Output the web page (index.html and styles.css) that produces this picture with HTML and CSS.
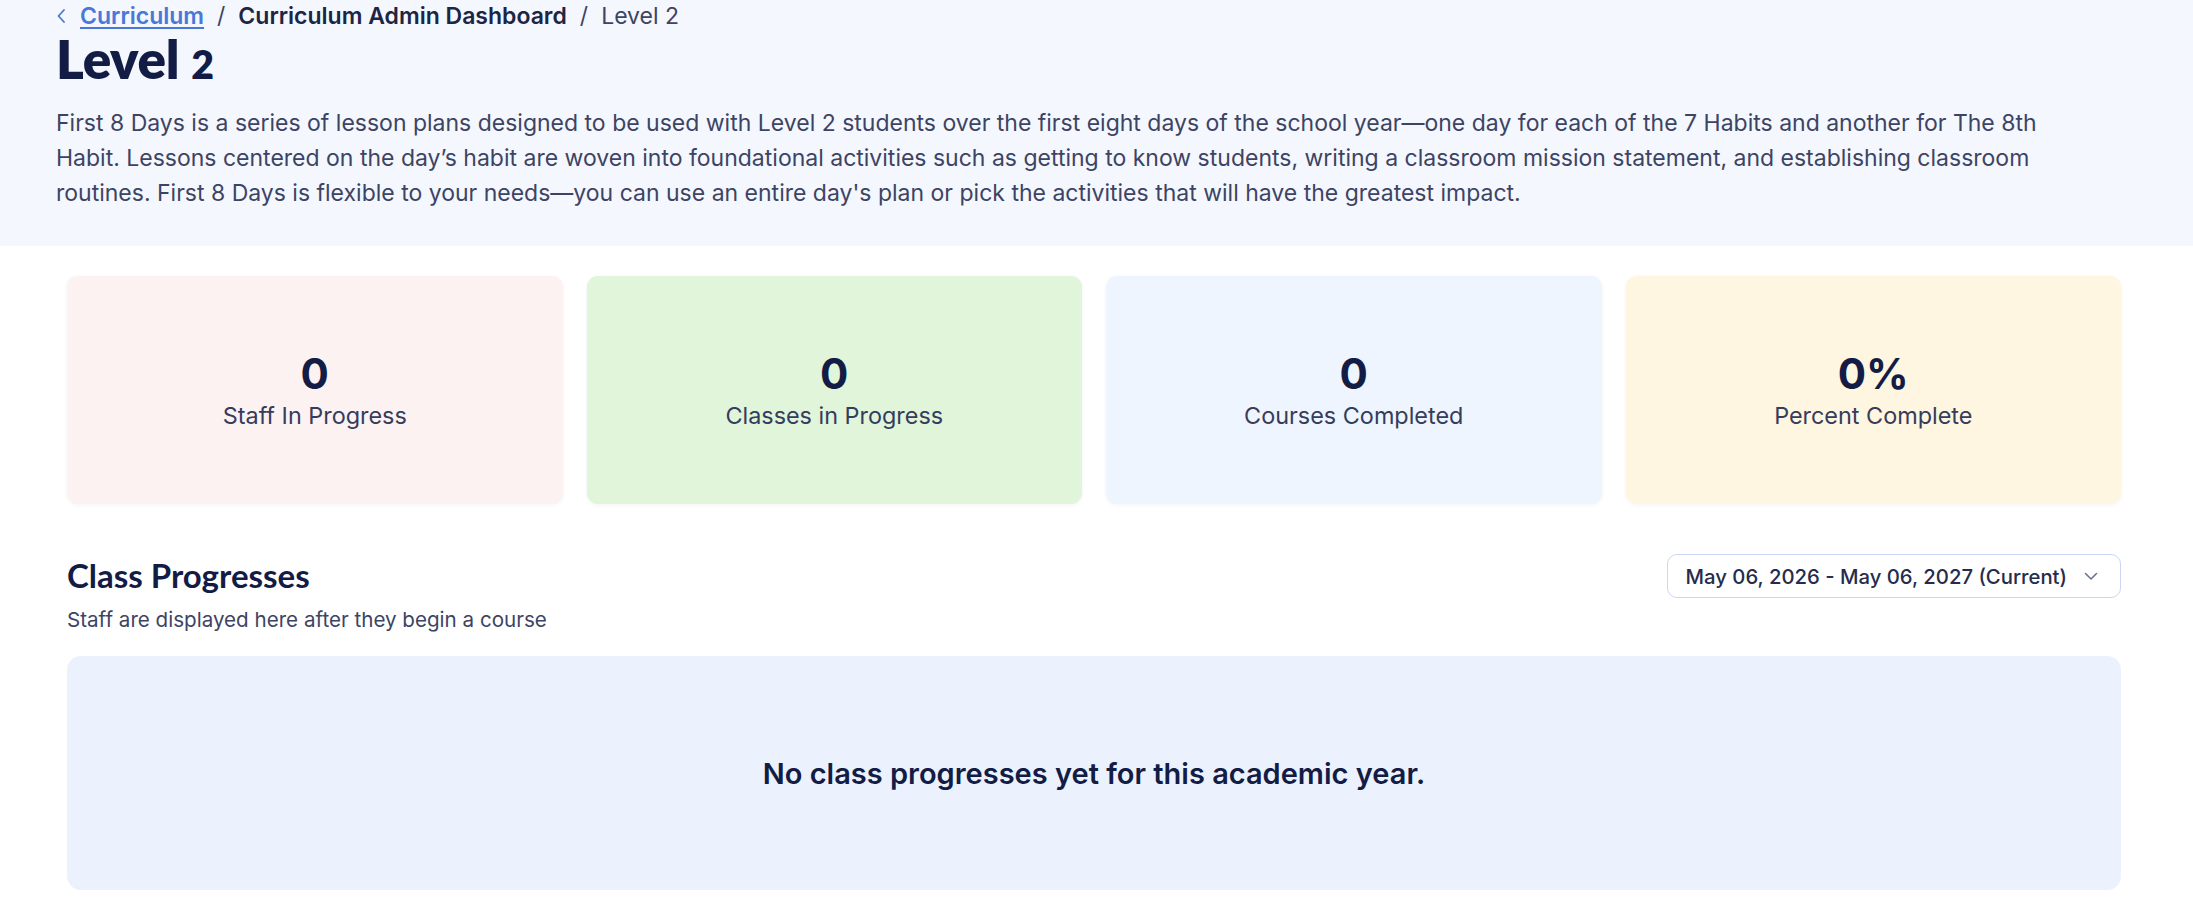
FILE: index.html
```html
<!DOCTYPE html>
<html lang="en">
<head>
  <meta charset="UTF-8" />
  <meta name="viewport" content="width=device-width, initial-scale=1" />
  <title>Level 2 - Curriculum Admin Dashboard</title>
  <link rel="stylesheet" href="styles.css">
</head>
<body>
  <header class="page-header">
    <nav class="breadcrumb">
      <svg class="crumb-back" width="10" height="16" viewBox="0 0 10 16" aria-hidden="true">
        <path d="M8 2 L2.5 8 L8 14" fill="none" stroke="#4a78d8" stroke-width="1.8" stroke-linecap="round" stroke-linejoin="round"/>
      </svg>
      <a href="#" class="crumb-link">Curriculum</a>
      <span class="crumb-sep">/</span>
      <span class="crumb-strong">Curriculum Admin Dashboard</span>
      <span class="crumb-sep">/</span>
      <span class="crumb-current">Level 2</span>
    </nav>

    <h1 class="page-title">Level <span class="old-num">2</span></h1>

    <p class="page-desc">
      First 8 Days is a series of lesson plans designed to be used with Level 2 students over the first eight days of the school year—one day for each of the 7 Habits and another for The 8th Habit. Lessons centered on the day’s habit are woven into foundational activities such as getting to know students, writing a classroom mission statement, and establishing classroom routines. First 8 Days is flexible to your needs—you can use an entire day's plan or pick the activities that will have the greatest impact.
    </p>
  </header>

  <main class="content">
    <section class="stats">
      <div class="stat-card stat-pink">
        <div class="stat-value">0</div>
        <div class="stat-label">Staff In Progress</div>
      </div>
      <div class="stat-card stat-green">
        <div class="stat-value">0</div>
        <div class="stat-label">Classes in Progress</div>
      </div>
      <div class="stat-card stat-blue">
        <div class="stat-value">0</div>
        <div class="stat-label">Courses Completed</div>
      </div>
      <div class="stat-card stat-yellow">
        <div class="stat-value">0%</div>
        <div class="stat-label">Percent Complete</div>
      </div>
    </section>

    <section class="progress-section">
      <div class="section-head">
        <div>
          <h2 class="section-title">Class Progresses</h2>
          <div class="section-sub">Staff are displayed here after they begin a course</div>
        </div>
        <button class="year-select">
          <span>May 06, 2026 - May 06, 2027 (Current)</span>
          <svg width="14" height="9" viewBox="0 0 14 9" aria-hidden="true">
            <path d="M1.5 1.5 L7 7 L12.5 1.5" fill="none" stroke="#6b7290" stroke-width="1.6" stroke-linecap="round" stroke-linejoin="round"/>
          </svg>
        </button>
      </div>

      <div class="empty-box">
        No class progresses yet for this academic year.
      </div>
    </section>
  </main>
</body>
</html>
```

FILE: styles.css
```css
html, body {
  margin: 0;
  padding: 0;
  background: #ffffff;
  font-family: Inter, 'Noto Sans', Arial, sans-serif;
  color: #1a2448;
}

.page-header {
  background: #f4f7fe;
  padding: 0 113px 35px 56px;
}

.breadcrumb {
  display: flex;
  align-items: center;
  gap: 13px;
  font-size: 23px;
  line-height: 32px;
  height: 32px;
}

.crumb-back {
  margin-right: 1px;
}

.crumb-link {
  color: #4a78d8;
  font-weight: 600;
  text-decoration: underline;
  text-underline-offset: 3px;
  text-decoration-thickness: 1.5px;
}

.crumb-sep {
  color: #3d4463;
}

.crumb-strong {
  font-weight: 600;
  color: #1d2545;
}

.crumb-current {
  color: #3d4463;
}

.page-title {
  margin: 1px 0 0;
  font-family: Lato, 'Open Sans', sans-serif;
  font-weight: 800;
  font-size: 53px;
  line-height: 52px;
  color: #121c45;
  letter-spacing: -0.3px;
}

.old-num {
  font-size: 0.74em;
}

.page-desc {
  margin: 16px 0 0;
  font-size: 23px;
  line-height: 35px;
  color: #3d4463;
}

.content {
  padding: 30px 72px 0 67px;
}

.stats {
  display: grid;
  grid-template-columns: repeat(4, 1fr);
  gap: 24px;
}

.stat-card {
  height: 228px;
  border-radius: 11px;
  display: flex;
  flex-direction: column;
  align-items: center;
  justify-content: center;
  box-shadow: 0 1px 4px rgba(30, 40, 80, 0.05);
}

.stat-pink { background: #fdf2f2; }
.stat-green { background: #e0f5da; }
.stat-blue { background: #eef5fe; }
.stat-yellow { background: #fef6e0; }

.stat-value {
  font-size: 42px;
  font-weight: 700;
  line-height: 50px;
  color: #121c45;
}

.stat-label {
  margin-top: 1px;
  font-size: 23.4px;
  line-height: 32px;
  color: #353c5c;
}

.progress-section {
  margin-top: 50px;
}

.section-head {
  display: flex;
  justify-content: space-between;
  align-items: flex-start;
}

.section-title {
  margin: 2px 0 0;
  font-family: Lato, 'Open Sans', sans-serif;
  font-weight: 700;
  font-size: 33px;
  line-height: 38px;
  color: #121c45;
}

.section-sub {
  margin-top: 12px;
  font-size: 20.6px;
  line-height: 28px;
  color: #3d4463;
}

.year-select {
  display: flex;
  align-items: center;
  gap: 17px;
  height: 44px;
  box-sizing: border-box;
  padding: 0 22px 0 18px;
  background: #ffffff;
  border: 1.5px solid #cad6f3;
  border-radius: 10px;
  font-family: Inter, 'Noto Sans', Arial, sans-serif;
  font-size: 20.3px;
  font-weight: 500;
  color: #252c4c;
  cursor: pointer;
}

.empty-box {
  margin-top: 22px;
  height: 234px;
  border-radius: 14px;
  background: #ebf2fd;
  display: flex;
  align-items: center;
  justify-content: center;
  font-size: 29px;
  font-weight: 600;
  color: #121c45;
}
```
